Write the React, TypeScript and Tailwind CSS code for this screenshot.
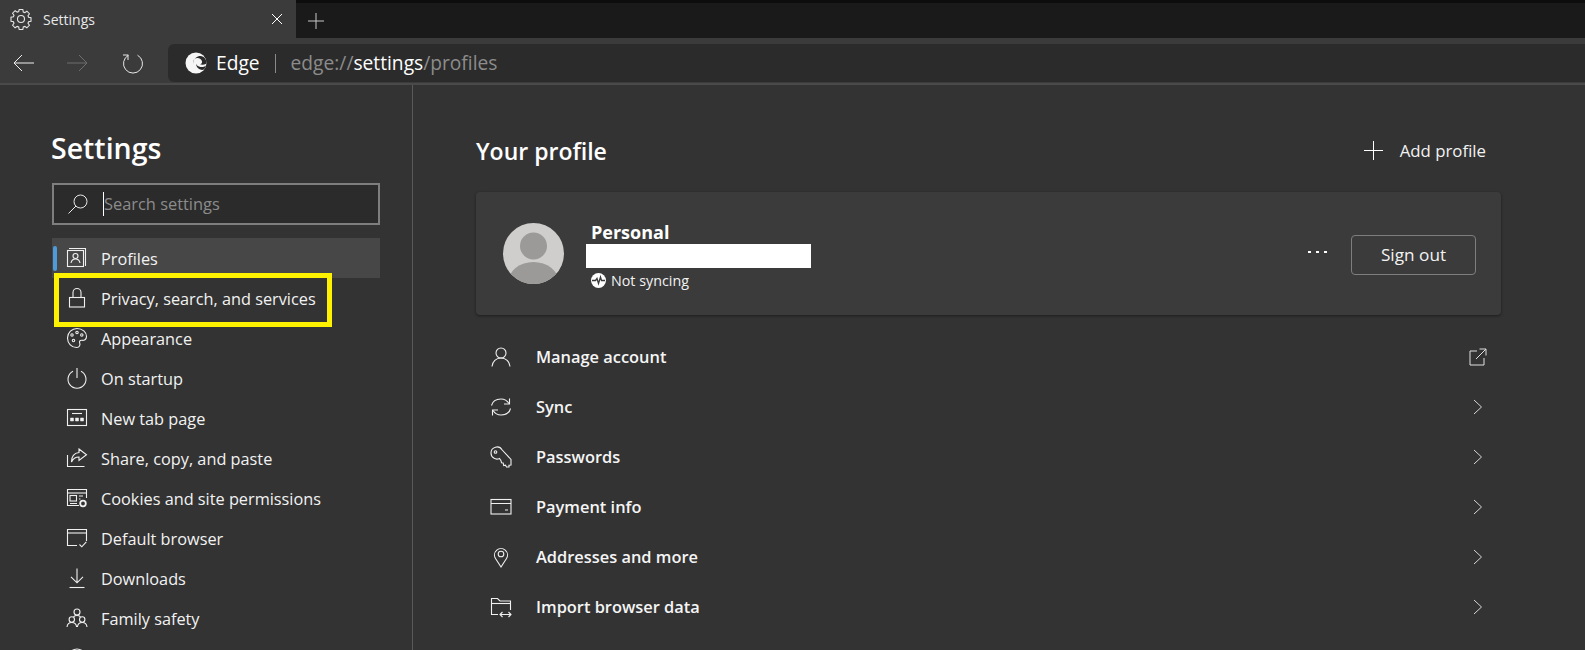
import type { ReactNode } from "react";

const font = "font-['Open_Sans','Noto_Sans',sans-serif]";

function Icon({ children, className = "h-[22px] w-[22px] text-[#f0f0f0]" }: { children: ReactNode; className?: string }) {
  return (
    <svg viewBox="0 0 22 22" fill="none" stroke="currentColor" strokeWidth="1.1" className={`shrink-0 ${className}`}>
      {children}
    </svg>
  );
}

function GearIcon() {
  return (
    <Icon className="h-[22px] w-[22px] text-[#e6e6e6]">
      <path d="M9.200 1.500h3.600l.5 2.500 1.500.6 2.100-1.400 2.500 2.500-1.400 2.100.6 1.500 2.400.5v3.400l-2.400.5-.6 1.500 1.400 2.100-2.500 2.500-2.100-1.400-1.500.6-.5 2.500H9.200l-.5-2.500-1.500-.6-2.100 1.400-2.500-2.500 1.400-2.100-.6-1.500-2.400-.5V9.300l2.400-.5.6-1.500-1.400-2.100 2.500-2.500 2.100 1.400 1.500-.6z" />
      <circle cx="11" cy="11" r="3.500" />
    </Icon>
  );
}

function EdgeLogo() {
  return (
    <svg viewBox="0 0 22 22" className="h-[22px] w-[22px] shrink-0">
      <circle cx="11" cy="11" r="10.500" fill="#f6f6f6" />
      <path d="M21.500 11c0-1.500-.4-3-1.200-4.200C18.500 4 15.500 3.500 13 4.500 9.800 5.700 8 8.500 8.500 11.500c-1-3 1-5.300 3.500-5.500 2.500-.2 4.500 1.300 5 3.500.3 1.300-.5 2.500-2 2.800 2 .8 4.500.5 6.500-.8z" fill="#2b2b2b" />
      <path d="M21 13.500c-1.500 1.200-3.500 1.800-5.500 1.500-2-.3-3.700-1.500-4.500-3.200.2 3 2.300 5.500 5 6 1.200.2 2.300 0 3.200-.5.900-1.100 1.500-2.400 1.800-3.800z" fill="#2b2b2b" />
    </svg>
  );
}

const navIcons: Record<string, ReactNode> = {
  Profiles: (
    <>
      <path d="M3 1.500h16.500V19" />
      <rect x="1.500" y="3.500" width="16" height="16" />
      <circle cx="9.500" cy="9" r="2.500" />
      <path d="M5 16c.5-2.800 2.200-4 4.500-4s4 1.200 4.500 4" />
    </>
  ),
  Privacy: (
    <>
      <rect x="3.500" y="10.500" width="15" height="9.500" />
      <path d="M7 10.500V5.500a4 4 0 0 1 8 0v5" />
    </>
  ),
  Appearance: (
    <>
      <path d="M11 1.500c5.500 0 9.500 3.800 9.500 8 0 3.200-2.500 4-4.500 3.800-2-.2-3 1-2.300 2.700.8 2-.3 4.500-3 4.500-5 0-9.200-4-9.200-9.500S6 1.500 11 1.500z" />
      <circle cx="6" cy="8" r="1.200" />
      <circle cx="11" cy="5.500" r="1.200" />
      <circle cx="15.800" cy="8" r="1.200" />
      <circle cx="7.500" cy="13.500" r="1.200" />
    </>
  ),
  Startup: (
    <>
      <path d="M7 4.200a9 9 0 1 0 8 0" />
      <path d="M11 1v10" />
    </>
  ),
  NewTab: (
    <>
      <rect x="1.500" y="2.500" width="19" height="16" />
      <path d="M6 6.500h10" />
      <path d="M4.500 11h3v3h-3zM9.500 11h3v3h-3zM14.500 11h3v3h-3z" fill="currentColor" strokeWidth="0.5" />
    </>
  ),
  Share: (
    <>
      <path d="M1.500 8v11.500h17" />
      <path d="M13 2l7.500 5.800-7.500 5.700v-3.500c-3.500 0-6 1.500-7.500 5 0-5.500 3-9 7.500-9.500z" />
    </>
  ),
  Cookies: (
    <>
      <path d="M13 18.500H1.500v-16h19V11" />
      <path d="M1.500 6h19" />
      <rect x="4" y="8.500" width="6.500" height="5.500" />
      <path d="M4 16.500h7M13 9h4M13 12h1.500" />
      <circle cx="17" cy="16.500" r="2.800" strokeWidth="1.800" />
    </>
  ),
  Default: (
    <>
      <path d="M11 18.500H1.500v-16h19V14" />
      <path d="M1.500 6h19" />
      <path d="M13.500 17.500l2.300 2.300 4.500-5" />
    </>
  ),
  Downloads: (
    <>
      <path d="M11 1.500v14M5 9.800l6 6 6-6" />
      <path d="M3.500 20.500h15" />
    </>
  ),
  Family: (
    <>
      <circle cx="11" cy="5" r="3" />
      <circle cx="5.800" cy="12.500" r="2.700" />
      <circle cx="16.200" cy="12.500" r="2.700" />
      <path d="M1 20c.3-2.800 2.200-4.500 4.800-4.500S10.300 17.200 10.600 20M11.400 20c.3-2.800 2.200-4.500 4.800-4.500S20.700 17.200 21 20" />
      <path d="M7.500 9.800c1-1 2.200-1.300 3.500-1.300s2.500.3 3.500 1.300" />
    </>
  ),
  Languages: <circle cx="11" cy="11" r="9" />,
};

const navItems = [
  { key: "Profiles", label: "Profiles" },
  { key: "Privacy", label: "Privacy, search, and services" },
  { key: "Appearance", label: "Appearance" },
  { key: "Startup", label: "On startup" },
  { key: "NewTab", label: "New tab page" },
  { key: "Share", label: "Share, copy, and paste" },
  { key: "Cookies", label: "Cookies and site permissions" },
  { key: "Default", label: "Default browser" },
  { key: "Downloads", label: "Downloads" },
  { key: "Family", label: "Family safety" },
  { key: "Languages", label: "" },
];

const profileRows: { label: string; icon: ReactNode; external?: boolean }[] = [
  {
    label: "Manage account",
    external: true,
    icon: (
      <>
        <circle cx="11" cy="7" r="5" />
        <path d="M2 20.500c.5-5 4-8.500 9-8.500s8.500 3.500 9 8.500" />
      </>
    ),
  },
  {
    label: "Sync",
    icon: (
      <>
        <path d="M1.500 9.500C2.500 5.500 6 3 11 3c3.500 0 6 1.300 8 4.500" />
        <path d="M20.500 12.500c-1 4-4.500 6.500-9.500 6.500-3.500 0-6-1.300-8-4.500" />
        <path d="M19.500 2.500v5.500H14M2.500 19.500V14H8" />
      </>
    ),
  },
  {
    label: "Passwords",
    icon: (
      <>
        <path d="M1 7a6 6 0 0 1 11.200-3L21 13.500V19l-2 .2V21h-2.500l-1-1.800-1.800.3-.5-2.500-1.700-.3-.5-2-1.500-2.200A6 6 0 0 1 1 7z" />
        <circle cx="5.500" cy="6" r="1.300" />
      </>
    ),
  },
  {
    label: "Payment info",
    icon: (
      <>
        <rect x="1" y="3.500" width="20" height="14.500" />
        <path d="M1 7.500h20M15 14h3" />
      </>
    ),
  },
  {
    label: "Addresses and more",
    icon: (
      <>
        <path d="M11 21L5.500 12.500a6.500 6.500 0 1 1 11 0z" />
        <circle cx="11" cy="8" r="2.800" />
      </>
    ),
  },
  {
    label: "Import browser data",
    icon: (
      <>
        <path d="M8 18.500H1.500v-16h6l2.500 2.500h10.500v9" />
        <path d="M1.500 7.500h19" />
        <path d="M10 18.500h11M12.500 16l-2.500 2.500 2.500 2.500M18.500 16l2.500 2.500-2.500 2.500" />
      </>
    ),
  },
];

function TitleBar() {
  return (
    <div className="flex h-[38px] bg-[#1a1a1a]">
      <div className="flex w-[296px] items-center bg-[#3b3b3b] pl-[10px] pr-[13px]">
        <GearIcon />
        <span className="ml-[11px] flex-1 text-[14px] text-[#e8e8e8]">Settings</span>
        <svg viewBox="0 0 12 12" stroke="currentColor" className="h-[12px] w-[12px] text-white">
          <path d="M1 1l10 10M11 1L1 11" />
        </svg>
      </div>
      <div className="flex flex-1 items-center rounded-bl-md border-t-[3px] border-[#0d0d0d] pl-[12px]">
        <svg viewBox="0 0 16 16" stroke="currentColor" className="h-[16px] w-[16px] text-[#c8c8c8]">
          <path d="M8 0v16M0 8h16" />
        </svg>
      </div>
    </div>
  );
}

function ToolBar() {
  return (
    <div className="flex h-[47px] items-center border-b-[2px] border-[#4a4a4a] bg-[#3b3b3b] pl-[13px] pt-[5px]">
      <svg viewBox="0 0 21 18" stroke="currentColor" fill="none" className="h-[18px] w-[21px] text-[#f0f0f0]">
        <path d="M21 9H1M9 1L1 9l8 8" />
      </svg>
      <svg viewBox="0 0 21 18" stroke="currentColor" fill="none" className="ml-[33px] h-[18px] w-[21px] text-[#6e6e6e]">
        <path d="M0 9h20M12 1l8 8-8 8" />
      </svg>
      <svg viewBox="0 0 22 22" stroke="currentColor" fill="none" className="ml-[34px] h-[22px] w-[22px] text-[#e8e8e8]">
        <path d="M6.500 3.200a9.500 9.500 0 1 0 9 0" />
        <path d="M6 8V3H1" />
      </svg>
      <div className="ml-[24px] flex h-[38px] flex-1 items-center rounded-l-md bg-[#2b2b2b] pl-[17px] text-[19.200px]">
        <EdgeLogo />
        <span className="ml-[9px] text-white">Edge</span>
        <span className="ml-[15px] h-[19px] w-px bg-[#8a8a8a]" />
        <span className="ml-[15px] text-[#8c8c8c]">
          edge://<span className="text-white">settings</span>/profiles
        </span>
      </div>
    </div>
  );
}

function Sidebar() {
  return (
    <aside className="w-[413px] shrink-0 border-r border-[#5a5a5a] pl-[52px] pr-[32px] pt-[44px]">
      <h1 className="-ml-px h-[39px] text-[28.500px] font-semibold leading-[39px] text-white">Settings</h1>
      <div className="mt-[15px] flex h-[42px] items-center border-2 border-[#7e7e7e] bg-[#2b2b2b] pl-[13px]">
        <svg viewBox="0 0 22 22" stroke="currentColor" fill="none" className="h-[22px] w-[22px] text-[#e8e8e8]">
          <circle cx="13.500" cy="8.500" r="6.500" />
          <path d="M9 13L1.500 20.500" />
        </svg>
        <span className="ml-[14px] h-[24px] w-px bg-white" />
        <span className="pt-px text-[16.400px] text-[#8c8c8c]">Search settings</span>
      </div>
      <nav className="mt-[13px]">
        {navItems.map((item, i) => (
          <div key={item.key} className={`relative flex h-[40px] items-center pl-[14px] ${i === 0 ? "bg-[#474747]" : ""}`}>
            {i === 0 && <span className="absolute left-[1px] top-[8px] h-[25px] w-[4px] rounded-sm bg-[#4f9bd9]" />}
            {i === 1 && <span className="absolute -top-[5px] left-[2px] h-[54px] w-[278px] border-[5px] border-[#fff200]" />}
            <Icon>{navIcons[item.key]}</Icon>
            {item.label && <span className="ml-[13px] pt-[3px] text-[16.300px] text-[#f2f2f2]">{item.label}</span>}
          </div>
        ))}
      </nav>
    </aside>
  );
}

function ProfileCard() {
  return (
    <div className="mt-[22px] flex h-[123px] items-center rounded bg-[#3b3b3b] pl-[27px] pr-[25px] pt-[3px] shadow-[0_1px_3px_rgba(0,0,0,0.45)]">
      <svg viewBox="0 0 61 61" className="-mt-[3px] h-[61px] w-[61px] shrink-0">
        <defs>
          <clipPath id="avatar">
            <circle cx="30.500" cy="30.500" r="30.500" />
          </clipPath>
        </defs>
        <circle cx="30.500" cy="30.500" r="30.500" fill="#cfcecc" />
        <circle cx="30.500" cy="23" r="13.500" fill="#9b9a98" />
        <ellipse cx="30.500" cy="59" rx="25" ry="20" fill="#9b9a98" clipPath="url(#avatar)" />
      </svg>
      <div className="ml-[22px] w-[225px]">
        <p className="pl-[5px] text-[18px] font-bold leading-[24px] text-white">Personal</p>
        <div className="h-[24px] bg-white" />
        <div className="mt-[3px] flex items-center pl-[5px]">
          <svg viewBox="0 0 15 15" className="h-[15px] w-[15px] shrink-0">
            <circle cx="7.500" cy="7.500" r="7.500" fill="#fff" />
            <path d="M1 7.500h3.500l1.500-2 1.500 5L9.500 4l1 3.500H14" fill="none" stroke="#3b3b3b" strokeWidth="1.300" />
          </svg>
          <span className="ml-[5px] text-[14.300px] leading-[20px] text-[#f2f2f2]">Not syncing</span>
        </div>
      </div>
      <div className="ml-auto flex items-center">
        <div className="-mt-[6px] flex gap-[5px]">
          <span className="h-[2px] w-[3px] bg-white" />
          <span className="h-[2px] w-[3px] bg-white" />
          <span className="h-[2px] w-[3px] bg-white" />
        </div>
        <button className="ml-[24px] h-[40px] w-[125px] rounded-sm border border-[#7e7e7e] text-[17.200px] text-[#f2f2f2]">Sign out</button>
      </div>
    </div>
  );
}

function Main() {
  return (
    <main className="w-[1088px] pl-[63px] pt-[46px]">
      <div className="flex h-[39px] items-center justify-between pr-[15px]">
        <h2 className="pt-px text-[23px] font-semibold text-white">Your profile</h2>
        <div className="flex items-center">
          <svg viewBox="0 0 19 19" stroke="currentColor" className="h-[19px] w-[19px] text-white">
            <path d="M9.500 0v19M0 9.500h19" />
          </svg>
          <span className="ml-[17px] text-[16.800px] text-[#f2f2f2]">Add profile</span>
        </div>
      </div>
      <ProfileCard />
      <div className="mt-[17px]">
        {profileRows.map((row) => (
          <div key={row.label} className="flex h-[50px] items-center pl-[14px] pr-[14px]">
            <Icon>{row.icon}</Icon>
            <span className="ml-[24px] flex-1 text-[16.400px] font-semibold text-[#f5f5f5]">{row.label}</span>
            {row.external ? (
              <svg viewBox="0 0 18 18" stroke="currentColor" fill="none" className="h-[18px] w-[18px] text-[#e0e0e0]">
                <path d="M8 3H1v14h14v-7M7 11L17 1M10.500 1H17v6.500" />
              </svg>
            ) : (
              <svg viewBox="0 0 10 16" stroke="currentColor" fill="none" className="mr-[4px] h-[16px] w-[10px] text-[#d8d8d8]">
                <path d="M1 1l7.500 7L1 15" />
              </svg>
            )}
          </div>
        ))}
      </div>
    </main>
  );
}

export default function App() {
  return (
    <div className={`flex h-[650px] w-[1585px] flex-col overflow-hidden bg-[#333333] ${font}`}>
      <TitleBar />
      <ToolBar />
      <div className="flex min-h-0 flex-1">
        <Sidebar />
        <Main />
      </div>
    </div>
  );
}
